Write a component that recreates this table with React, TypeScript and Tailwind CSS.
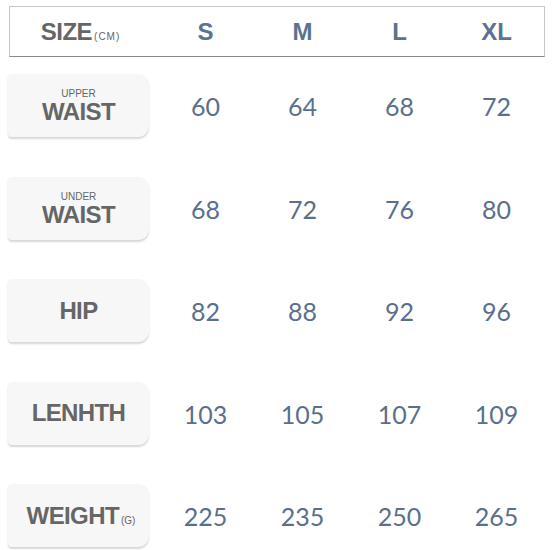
import React from "react";

const cols = ["S", "M", "L", "XL"];
const rows: { top?: string; main: string; sub?: string; vals: number[] }[] = [
  { top: "UPPER", main: "WAIST", vals: [60, 64, 68, 72] },
  { top: "UNDER", main: "WAIST", vals: [68, 72, 76, 80] },
  { main: "HIP", vals: [82, 88, 92, 96] },
  { main: "LENHTH", vals: [103, 105, 107, 109] },
  { main: "WEIGHT", sub: "(G)", vals: [225, 235, 250, 265] },
];

const labelFont = { fontFamily: '"Liberation Sans", Arial, sans-serif' };
const numFont = { fontFamily: 'Lato, "Open Sans", sans-serif' };

export default function App() {
  return (
    <div className="w-[556px] h-[550px] bg-white overflow-hidden">
      <div className="pt-[6px] pl-[9px]">
        <div className="w-[536px] h-[51px] border border-[#c9c9c9] border-b-[#8a8a8a] grid grid-cols-[147px_repeat(4,97px)] items-center">
          <div className="flex items-baseline justify-center pr-[6px]" style={labelFont}>
            <span className="text-[24px] leading-[28px] font-bold text-[#666] tracking-[-0.5px]">SIZE</span>
            <span className="text-[10px] leading-[12px] text-[#666] ml-[2px] tracking-[1px]">(CM)</span>
          </div>
          {cols.map((c) => (
            <div key={c} className="text-center text-[24px] leading-[28px] font-bold text-[#5b7391]" style={labelFont}>
              {c}
            </div>
          ))}
        </div>
      </div>
      <div className="mt-[17px] grid grid-cols-[157px_repeat(4,97px)] gap-y-[39.5px]">
        {rows.map((r, i) => (
          <React.Fragment key={i}>
            <div className="pl-[8px]">
              <div
                className="w-[141px] h-[63px] bg-[#f7f7f7] rounded-tl-[4px] rounded-bl-[4px] rounded-tr-[11px] rounded-br-[11px] shadow-[0_2px_2px_rgba(0,0,0,0.16)] flex flex-col items-center justify-center gap-[2px]"
                style={labelFont}
              >
                {r.top && (
                  <div className="text-[10px] leading-[10px] text-[#666] mt-[1px]">{r.top}</div>
                )}
                <div className={`flex items-baseline ${r.sub ? "pl-[5px]" : ""}`}>
                  <span className="text-[24px] leading-[22px] font-bold text-[#666] tracking-[-0.6px]">
                    {r.main}
                  </span>
                  {r.sub && <span className="text-[10px] leading-[12px] text-[#666] ml-[2px]">{r.sub}</span>}
                </div>
              </div>
            </div>
            {r.vals.map((v, j) => (
              <div
                key={j}
                className="flex items-center justify-center text-[25px] text-[#5a6f8c] pt-[3px]"
                style={numFont}
              >
                {v}
              </div>
            ))}
          </React.Fragment>
        ))}
      </div>
    </div>
  );
}
